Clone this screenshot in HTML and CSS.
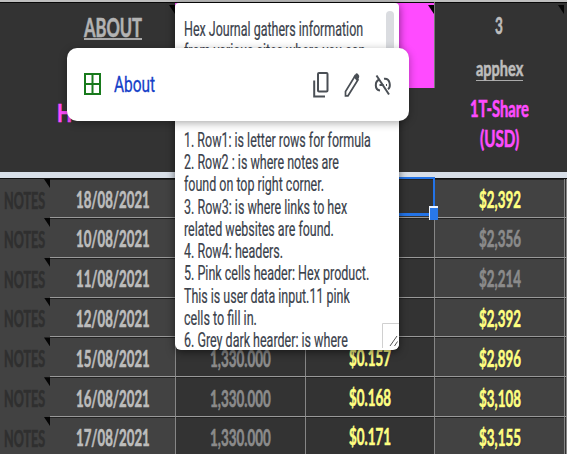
FILE: index.html
```html
<!DOCTYPE html>
<html lang="en">
<head>
<meta charset="utf-8">
<title>Hex Journal</title>
<link rel="stylesheet" href="styles.css">
</head>
<body>
<main class="sheet">
  <header class="head">
    <div class="cell-about mark"><span class="fit about" data-w="58">ABOUT</span><span class="fit hex" data-w="15">H</span></div>
    <div class="pink mark"></div>
    <div class="cell-share mark"><span class="fit num" data-w="8">3</span><span class="fit app" data-w="47">apphex</span><span class="fit share" data-w="59">1T-Share</span><span class="fit usd" data-w="39">(USD)</span></div>
  </header>
  <div class="freeze"></div>
  <section class="rows" id="rows"></section>
  <div class="selection"></div>
  <aside class="note">
    <p><span class="fit" data-w="179">Hex Journal gathers information</span></p>
    <p><span class="fit" data-w="181">from various sites where you can</span></p>
    <p></p><p></p><p></p>
    <p><span class="fit" data-w="187">1. Row1: is letter rows for formula</span></p>
    <p><span class="fit" data-w="155">2. Row2 : is where notes are</span></p>
    <p><span class="fit" data-w="140">found on top right corner.</span></p>
    <p><span class="fit" data-w="163">3. Row3: is where links to hex</span></p>
    <p><span class="fit" data-w="150">related websites are found.</span></p>
    <p><span class="fit" data-w="99">4. Row4: headers.</span></p>
    <p><span class="fit" data-w="185">5. Pink cells header: Hex product.</span></p>
    <p><span class="fit" data-w="166">This is user data input.11 pink</span></p>
    <p><span class="fit" data-w="73">cells to fill in.</span></p>
    <p><span class="fit" data-w="164">6. Grey dark hearder: is where</span></p>
    <i class="thumb"></i>
    <svg class="grip" viewBox="0 0 17 25"><path d="M.5 25V.5H17" fill="none" stroke="#d0d0d0"/><path d="M8 23L15 13M12.500 23L15.500 18.500" fill="none" stroke="#555" stroke-width="1"/></svg>
  </aside>
  <div class="link-card">
    <svg class="grid-icon" viewBox="0 0 17 22"><path d="M1 1H16V21H1ZM8.500 1V21M1 11H16" fill="none" stroke="#187a1c" stroke-width="2"/></svg>
    <span class="fit link" data-w="41">About</span>
    <svg class="tools" viewBox="0 0 82 30">
      <g fill="none" stroke="#4a4f55" stroke-width="2">
        <rect x="5" y="3" width="9.500" height="18.500" rx="1"/>
        <path d="M1.200 10.500V26.500H12"/>
        <path d="M32.500 25.800V21.500L42 6L45 9.800L35 25.800Z" stroke-width="1.700"/>
      </g>
      <path d="M40.500 7L43 3.500Q44 2.800 45 4L46 5.500Q46.500 6.500 46 7.700L44 11Z" fill="#4a4f55"/>
      <g fill="none" stroke="#4a4f55" stroke-width="2">
        <path d="M66.500 9.500C61.500 11 61.500 20 67 20.500M71 8.800C77.500 8 78 17 75 19.300M66.500 15H70.500M73 15H74"/>
        <path d="M63.500 5.500L76 24.500"/>
      </g>
    </svg>
  </div>
</main>
<script src="script.js"></script>
</body>
</html>
```
FILE: styles.css
```css
* { box-sizing: border-box; }
body { margin: 0; overflow: hidden; background: #333; }
.sheet { position: relative; width: 567px; height: 454px; overflow: hidden; font-family: Lato, sans-serif; font-weight: 700; }
.head { height: 172px; border-top: 2px solid #bfbfbf; box-shadow: inset 0 1px #080808; display: grid; grid-template-columns: 175px 260px 132px; background: #333; }
.fit { display: inline-block; white-space: nowrap; transform-origin: left center; flex: none; }
.slot { display: block; flex: none; white-space: nowrap; }
.head .fit, .rows .fit { -webkit-text-stroke: .6px currentColor; }
.mark { position: relative; }
.mark::after { content: ""; position: absolute; right: 0; top: 3px; width: 6px; height: 9px; background: #050505; clip-path: polygon(0 0, 100% 0, 100% 100%); }
.cell-about { display: flex; flex-direction: column; align-items: flex-start; padding: 10px 0 0 84px; color: #b3b3b3; }
.cell-about .slot { height: 30px; line-height: 30px; }
.about { font-size: 26px; }
.cell-about .slot:first-child { height: 28px; border-bottom: 2px solid #a9a9a9; }
.hex { font-size: 25px; color: #ff4bff; }
.cell-about .slot:last-child { margin: 57px 0 0 -27px; }
.pink { height: 86px; background: #ff4bff; box-shadow: inset 0 1px #080808; border-right: 1px solid #777; }
.cell-share { display: flex; flex-direction: column; align-items: center; color: #bdbdbd; padding-right: 4px; }
.cell-share::after { right: 3px; }
.cell-share .slot { height: 30px; line-height: 30px; }
.cell-share .slot:first-child { margin-top: 9px; }
.cell-share .slot:nth-child(2) { height: 26px; margin-top: 14px; border-bottom: 1.5px solid #aaa; }
.cell-share .slot:nth-child(3) { margin-top: 12px; }
.num { font-size: 22px; }
.app { font-size: 21px; line-height: 26px; }
.share, .usd { font-size: 23px; color: #ff4bff; }
.freeze { height: 6px; background: #d8dfe8; }
.rows { border-top: 1px solid #111; }
.row { display: grid; grid-template-columns: 50px 126px 129.500px 129.500px 130px 2px; height: 39.8px; }
.row:first-child { height: 39px; }
.row > div { display: flex; align-items: center; justify-content: center; background: #333; border-right: 1px solid #868686; border-bottom: 1px solid #999; box-shadow: inset 0 1px #222; font-size: 22px; color: #8b8b8b; padding-top: 3px; }
.row > .notes { position: relative; background: #424242; border: 0; box-shadow: none; justify-content: flex-start; padding-left: 4px; color: #2f2f2f; }
.notes::after { content: ""; position: absolute; right: 0; top: 0; width: 6px; height: 9px; background: #050505; clip-path: polygon(0 0, 100% 0, 100% 100%); }
.row > .date { background: #424242; color: #bdbdbd; padding-left: 1px; }
.row > .usd-cell { background: #424242; }
.row > .bright { color: #ffff80; text-shadow: 1px 1px 1px #222244; }
.row > .price { padding-bottom: 2px; }
.selection { position: absolute; left: 306px; top: 177px; width: 129px; height: 39px; border: 2px solid #2373e6; border-bottom-width: 3px; }
.selection::after { content: ""; position: absolute; right: -5px; bottom: -7px; width: 8px; height: 12px; background: #2878e8; border-top: 2px solid #eef4ff; border-left: 1px solid #eef4ff; }
.note { position: absolute; left: 175px; top: 3px; width: 224px; height: 347px; padding: 15.5px 0 0 9px; overflow: hidden; background: #fff; border-radius: 4px 4px 6px 6px; font: 400 19.5px/22.25px Roboto, sans-serif; color: #3a414b; -webkit-text-stroke: .2px currentColor; box-shadow: 0 2px 8px #0008; }
.note p { margin: 0; height: 22.25px; }
.thumb { position: absolute; left: 211px; top: 8px; width: 8px; height: 60px; border-radius: 4px; background: #dadce0; }
.grip { position: absolute; right: 0; bottom: 2px; width: 17px; height: 25px; background: #fff; }
.link-card { position: absolute; left: 66.500px; top: 47.500px; width: 342px; height: 73.500px; border-radius: 10px; background: #fff; box-shadow: 0 2px 8px #0005; display: flex; align-items: center; padding: 0 14px 0 17.500px; }
.grid-icon { width: 17px; height: 22px; margin-right: 13px; }
.link { font: 400 21.5px/28px Roboto, sans-serif; color: #1540c8; -webkit-text-stroke: .3px currentColor; padding-top: 1px; }
.tools { width: 82px; height: 30px; margin: 1px 0 0 auto; }
```
FILE: script.js
```js
const data = [
  ["18/08/2021", "", "", "$2,392", true],
  ["10/08/2021", "", "", "$2,356", false],
  ["11/08/2021", "", "", "$2,214", false],
  ["12/08/2021", "", "", "$2,392", true],
  ["15/08/2021", "1,330.000", "$0.157", "$2,896", true],
  ["16/08/2021", "1,330.000", "$0.168", "$3,108", true],
  ["17/08/2021", "1,330.000", "$0.171", "$3,155", true]
];
const fit = (text, width) => text ? `<span class="fit" data-w="${width}">${text}</span>` : "";
document.getElementById("rows").innerHTML = data.map(([date, amount, price, usd, bright]) => `
  <div class="row">
    <div class="notes">${fit("NOTES", 41)}</div>
    <div class="date">${fit(date, 74)}</div>
    <div>${fit(amount, 61)}</div>
    <div class="price bright">${fit(price, 42)}</div>
    <div class="usd-cell ${bright ? "bright" : ""}">${fit(usd, 42)}</div>
    <div></div>
  </div>`).join("");

document.querySelectorAll(".fit").forEach(el => {
  const width = Number(el.dataset.w);
  const natural = el.offsetWidth;
  const slot = document.createElement("span");
  slot.className = "slot";
  slot.style.width = `${width}px`;
  el.replaceWith(slot);
  slot.append(el);
  el.style.transform = `scaleX(${width / natural})`;
});
```
